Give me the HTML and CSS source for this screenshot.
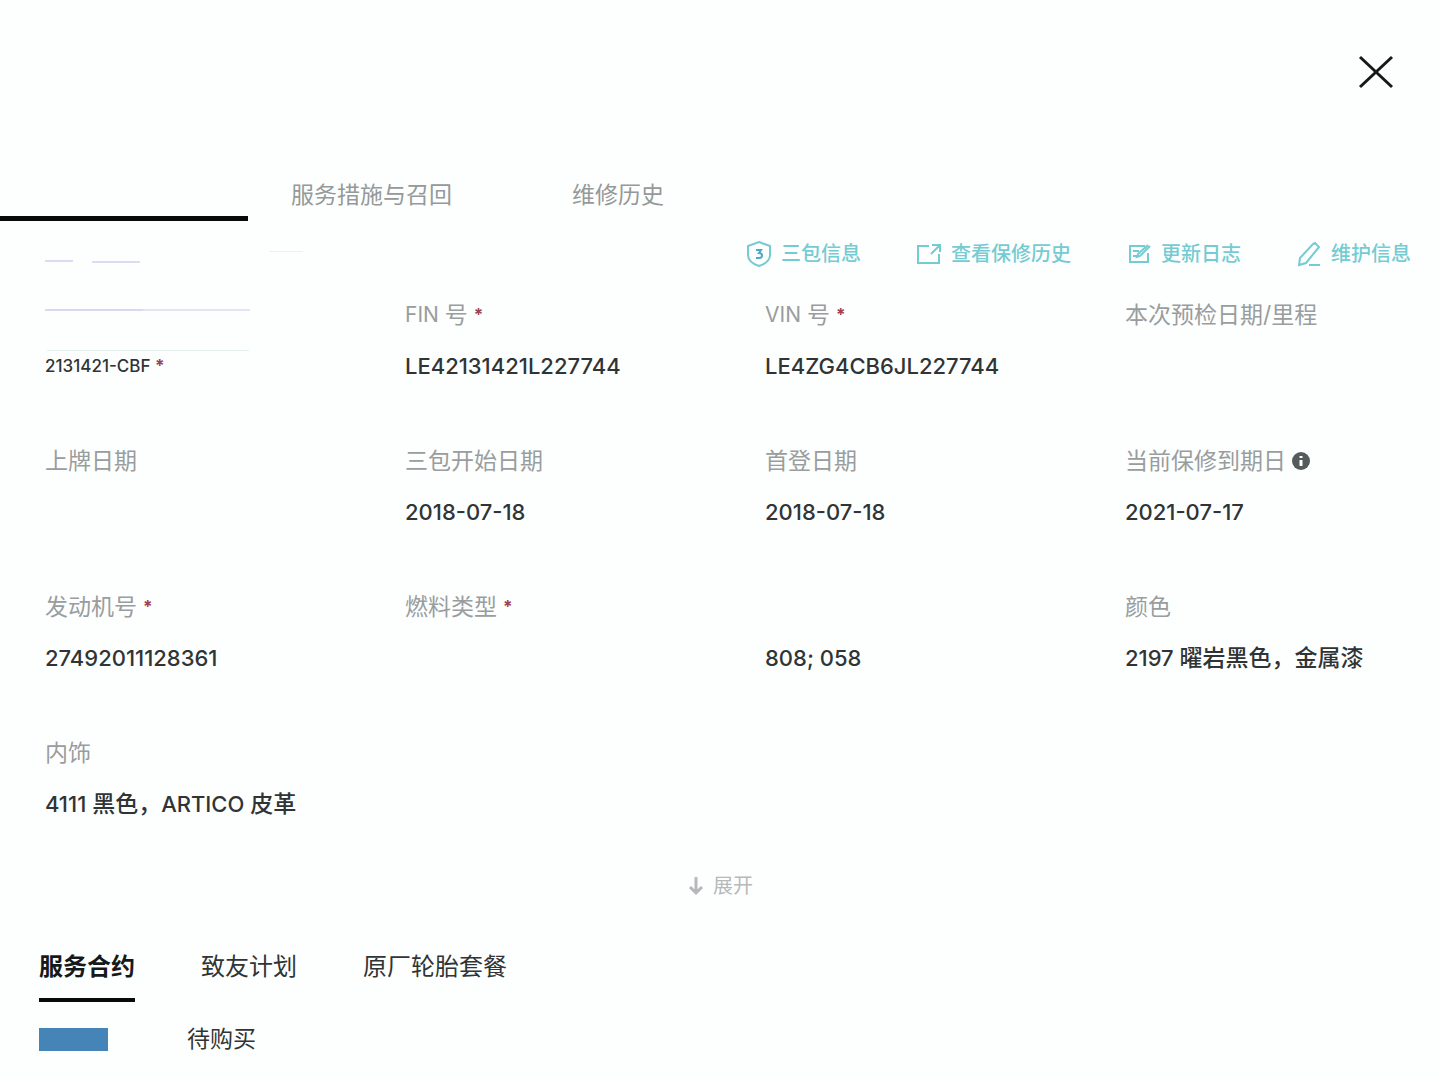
FILE: index.html
```html
<!DOCTYPE html>
<html lang="zh-CN">
<head>
<meta charset="utf-8">
<meta name="viewport" content="width=device-width, initial-scale=1">
<title>车辆信息</title>
<link rel="stylesheet" href="styles.css">
</head>
<body>
<header class="top">
  <button class="close" type="button" aria-label="关闭">
    <svg width="36" height="36" viewBox="0 0 36 36" fill="none" stroke="#15191a" stroke-width="3"><path d="M2 3 34 33M34 3 2 33"/></svg>
  </button>
</header>

<nav class="tabs">
  <button class="tab tab-active" type="button" aria-label="车辆信息"></button>
  <button class="tab" type="button">服务措施与召回</button>
  <button class="tab" type="button">维修历史</button>
</nav>

<main class="vehicle">
  <svg class="rules" width="260" height="106" viewBox="0 0 260 106" fill="none" aria-hidden="true">
    <path stroke="#d9dcf3" stroke-width="2" d="M0 13H28M47 14H95"/>
    <path stroke="#dad8ef" stroke-width="2" d="M0 62H98"/>
    <path stroke="#e3e3f6" stroke-width="2" d="M98 62H205"/>
    <path stroke="#e4eeee" stroke-width="1" d="M2 102.500H204"/>
    <path stroke="#eef1f1" stroke-width="1" d="M224 3.500H258"/>
  </svg>

  <div class="actions">
    <a class="action" href="#warranty">
      <svg width="28" height="28" viewBox="0 0 28 28" fill="none" stroke="currentColor" stroke-width="2"><path d="M14 2 25 6V15C25 20 20 24 14 26 8 24 3 20 3 15V6Z"/><path d="M11 10H16L14 13C18 13 18 18 14 18H11" stroke="#4dabc9" stroke-width="2"/></svg>
      三包信息
    </a>
    <a class="action" href="#warranty-history">
      <svg width="28" height="28" viewBox="0 0 28 28" fill="none" stroke="currentColor" stroke-width="2"><path d="M14 6H3V23H24V14M17 5H25V12M24 6 16 14"/></svg>
      查看保修历史
    </a>
    <a class="action" href="#log">
      <svg width="28" height="28" viewBox="0 0 28 28" fill="none" stroke="currentColor" stroke-width="2"><path d="M20 6H5V22H23V13M8 11H14M8 16H12M25 6 15 16 12 17 13 14 23 5"/></svg>
      更新日志
    </a>
    <a class="action" href="#maintenance">
      <svg width="28" height="28" viewBox="0 0 28 28" fill="none" stroke="currentColor" stroke-width="2"><path d="M20 3 24 7 11 23 4 25 5 18 18 4ZM14 25H25"/></svg>
      维护信息
    </a>
  </div>

  <dl class="fields">
    <div class="field"><dt></dt><dd class="small">2131421-CBF <b class="req">*</b></dd></div>
    <div class="field"><dt><span class="latin">FIN</span> 号 <b class="req">*</b></dt><dd>LE42131421L227744</dd></div>
    <div class="field"><dt><span class="latin">VIN</span> 号 <b class="req">*</b></dt><dd>LE4ZG4CB6JL227744</dd></div>
    <div class="field"><dt>本次预检日期/里程</dt><dd></dd></div>

    <div class="field"><dt>上牌日期</dt><dd></dd></div>
    <div class="field"><dt>三包开始日期</dt><dd>2018-07-18</dd></div>
    <div class="field"><dt>首登日期</dt><dd>2018-07-18</dd></div>
    <div class="field"><dt>当前保修到期日 <svg class="info" width="18" height="18" viewBox="0 0 18 18" aria-hidden="true"><circle cx="9" cy="9" r="9" fill="#555a5b"/><path d="M9 4V6M9 8V14" stroke="#fff" stroke-width="3"/></svg></dt><dd>2021-07-17</dd></div>

    <div class="field"><dt>发动机号 <b class="req">*</b></dt><dd>27492011128361</dd></div>
    <div class="field"><dt>燃料类型 <b class="req">*</b></dt><dd></dd></div>
    <div class="field"><dt></dt><dd>808; 058</dd></div>
    <div class="field"><dt>颜色</dt><dd>2197 <span class="han">曜岩黑色，金属漆</span></dd></div>

    <div class="field"><dt>内饰</dt><dd>4111 <span class="han">黑色，</span>ARTICO <span class="han">皮革</span></dd></div>
  </dl>

  <button class="expand" type="button">
    <svg width="18" height="20" viewBox="0 0 18 20" fill="none" stroke="currentColor" stroke-width="3"><path d="M9 1V17M3 11 9 17 15 11"/></svg>
    展开
  </button>
</main>

<section class="plans">
  <nav class="plan-tabs">
    <button class="plan-tab plan-active" type="button">服务合约</button>
    <button class="plan-tab" type="button">致友计划</button>
    <button class="plan-tab" type="button">原厂轮胎套餐</button>
  </nav>
  <div class="plan-row">
    <span class="swatch"></span>
    <span>待购买</span>
  </div>
</section>
</body>
</html>
```
FILE: styles.css
```css
* {
  box-sizing: border-box;
}

body {
  margin: 0;
  background: #fdffff;
  color: #303435;
  font-family: Inter, "Noto Sans CJK SC", sans-serif;
  font-size: 23px;
  line-height: 32px;
}

button {
  padding: 0;
  border: 0;
  background: none;
  color: inherit;
  font: inherit;
  cursor: pointer;
}

svg {
  flex: none;
}

.top {
  display: flex;
  justify-content: flex-end;
  padding: 54px 46px 0 0;
  height: 168px;
}

.close {
  width: 36px;
  height: 36px;
}

.close svg {
  display: block;
}

.tabs {
  display: flex;
  height: 53px;
  color: #959999;
}

.tab {
  margin-right: 120px;
}

.tab-active {
  width: 248px;
  margin-right: 43px;
  border-bottom: 5px solid #080a0a;
}

.vehicle {
  position: relative;
  padding-top: 17px;
}

.rules {
  position: absolute;
  top: 27px;
  left: 45px;
}

.actions {
  display: flex;
  justify-content: flex-end;
  gap: 54px;
  padding-right: 29px;
  font-size: 20px;
  font-weight: 500;
}

.action {
  display: flex;
  align-items: center;
  gap: 8px;
  color: #75cbd2;
  text-decoration: none;
}

.fields {
  display: grid;
  grid-template-columns: repeat(4, 1fr);
  grid-auto-rows: 146px;
  margin: 29px 0 0;
}

.field {
  padding-left: 45px;
}

dt {
  display: flex;
  align-items: center;
  gap: 6px;
  height: 32px;
  color: #999d9d;
}

dd {
  margin: 19px 0 0;
  height: 32px;
  font-size: 22px;
  font-weight: 500;
  white-space: nowrap;
}

.latin {
  font-size: 21px;
}

.han {
  font-size: 23px;
}

.small {
  font-size: 17px;
}

.req {
  color: #9c4054;
  font-size: 17px;
}

.expand {
  display: flex;
  align-items: center;
  gap: 8px;
  margin: -13px auto 0;
  color: #b5b9b9;
  font-size: 20px;
}

.plans {
  padding: 48px 39px 0;
}

.plan-tabs {
  display: flex;
  gap: 66px;
  font-size: 24px;
}

.plan-tab {
  height: 52px;
  padding-bottom: 15px;
  border-bottom: 4px solid transparent;
}

.plan-active {
  border-color: #080a0a;
  color: #15191a;
  font-weight: 700;
}

.plan-row {
  display: flex;
  align-items: center;
  gap: 79px;
  margin-top: 21px;
}

.swatch {
  width: 69px;
  height: 23px;
  background: #4484b6;
}
```
